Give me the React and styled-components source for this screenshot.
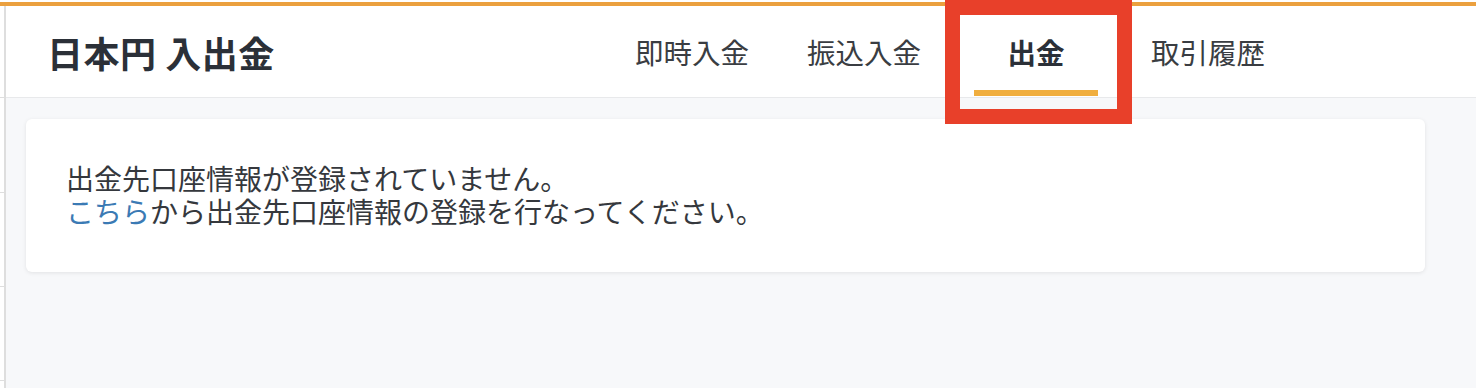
import React from "react";
import styled, { createGlobalStyle } from "styled-components";

const GlobalStyle = createGlobalStyle`
  html, body {
    margin: 0;
    padding: 0;
    background: #ffffff;
  }
  body {
    font-family: "Noto Sans CJK JP", "Noto Sans", sans-serif;
    color: #333;
  }
`;

const tabs = ["即時入金", "振込入金", "出金", "取引履歴"];
const sideItems = [92, 95, 94, 94];

export default function App() {
  return (
    <Page>
      <GlobalStyle />
      <TopBar />
      <Body>
        <Sidebar>
          {sideItems.map((h, i) => (
            <SideItem key={i} $h={h} />
          ))}
        </Sidebar>
        <Main>
          <Header>
            <Title>日本円 入出金</Title>
            <Tabs>
              {tabs.map((t) => (
                <Tab key={t} $active={t === "出金"}>
                  {t}
                </Tab>
              ))}
            </Tabs>
          </Header>
          <Content>
            <Card>
              <Line>出金先口座情報が登録されていません。</Line>
              <Line>
                <Link href="#">こちら</Link>から出金先口座情報の登録を行なってください。
              </Line>
            </Card>
          </Content>
        </Main>
      </Body>
      <Highlight />
    </Page>
  );
}

const Page = styled.div`
  position: relative;
  width: 1476px;
  height: 388px;
  overflow: hidden;
  display: flex;
  flex-direction: column;
  padding-top: 2px;
  box-sizing: border-box;
`;

const TopBar = styled.div`
  height: 4px;
  background: #eba03e;
  flex-shrink: 0;
`;

const Body = styled.div`
  flex: 1;
  display: flex;
  min-height: 0;
`;

const Sidebar = styled.div`
  width: 4px;
  border-right: 2px solid #dedede;
  background: #fff;
  display: flex;
  flex-direction: column;
`;

const SideItem = styled.div`
  height: ${(p) => p.$h - 1}px;
  border-bottom: 1px solid #dedede;
  flex-shrink: 0;
`;

const Main = styled.div`
  flex: 1;
  display: flex;
  flex-direction: column;
  background: #f7f8fa;
`;

const Header = styled.div`
  height: 92px;
  flex-shrink: 0;
  box-sizing: border-box;
  background: #fff;
  border-bottom: 1px solid #e8e9eb;
  display: flex;
  align-items: stretch;
  justify-content: space-between;
  padding: 0 182px 0 41px;
`;

const Title = styled.h1`
  margin: 0;
  align-self: center;
  font-size: 36px;
  font-weight: 700;
  color: #2b3038;
  letter-spacing: 0.5px;
`;

const Tabs = styled.nav`
  display: flex;
`;

const Tab = styled.div`
  position: relative;
  width: 172px;
  display: flex;
  align-items: center;
  justify-content: center;
  font-size: 28.5px;
  font-weight: ${(p) => (p.$active ? 700 : 400)};
  color: ${(p) => (p.$active ? "#2b3038" : "#3a3d42")};

  &::after {
    content: "";
    display: ${(p) => (p.$active ? "block" : "none")};
    position: absolute;
    left: 24px;
    right: 24px;
    bottom: 1px;
    height: 6px;
    background: #f0ae3f;
  }
`;

const Content = styled.div`
  padding: 21px 51px 0 20px;
`;

const Card = styled.div`
  background: #fff;
  border-radius: 6px;
  box-shadow: 0 1px 4px rgba(0, 0, 0, 0.09);
  padding: 43px 40px 44px;
`;

const Line = styled.div`
  font-size: 28px;
  line-height: 33px;
  color: #35383d;
  white-space: nowrap;
`;

const Link = styled.a`
  color: #3b7ab4;
  text-decoration: none;
`;

const Highlight = styled.div`
  position: absolute;
  left: 945px;
  top: 0;
  width: 187px;
  height: 124px;
  box-sizing: border-box;
  border: 15px solid #e8402a;
  pointer-events: none;
`;
